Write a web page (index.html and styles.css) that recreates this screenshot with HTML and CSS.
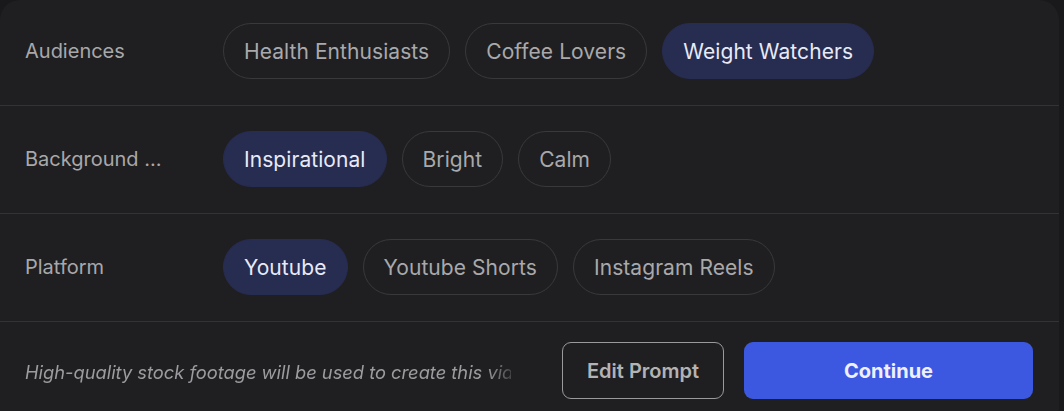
FILE: index.html
```html
<!DOCTYPE html>
<html lang="en">
<head>
<meta charset="utf-8">
<title>Video options</title>
<link rel="stylesheet" href="styles.css">
</head>
<body>
<div class="card">
  <div class="row first">
    <div class="label">Audiences</div>
    <div class="chips">
      <span class="chip">Health Enthusiasts</span>
      <span class="chip">Coffee Lovers</span>
      <span class="chip active">Weight Watchers</span>
    </div>
  </div>
  <div class="row">
    <div class="label">Background Music</div>
    <div class="chips">
      <span class="chip active">Inspirational</span>
      <span class="chip">Bright</span>
      <span class="chip">Calm</span>
    </div>
  </div>
  <div class="row">
    <div class="label">Platform</div>
    <div class="chips">
      <span class="chip active">Youtube</span>
      <span class="chip">Youtube Shorts</span>
      <span class="chip">Instagram Reels</span>
    </div>
  </div>
  <div class="footer">
    <div class="note">High-quality stock footage will be used to create this video</div>
    <div class="actions">
      <button class="btn btn-outline">Edit Prompt</button>
      <button class="btn btn-primary">Continue</button>
    </div>
  </div>
</div>
</body>
</html>
```
FILE: styles.css
```css
html, body {
  margin: 0;
  padding: 0;
  background: #19191b;
}
body {
  font-family: Inter, "Noto Sans", sans-serif;
  height: 411px;
  overflow: hidden;
}
.card {
  width: 1059px;
  background: #1f1f21;
  border-radius: 20px;
  overflow: hidden;
  height: 430px;
}
.row {
  display: flex;
  align-items: center;
  padding: 25px 25px 26px;
  border-bottom: 1px solid #333336;
}
.row.first {
  padding-top: 23px;
}
.label {
  flex: none;
  width: 140px;
  margin-right: 58px;
  font-size: 20px;
  color: #a8a8ab;
  white-space: nowrap;
  overflow: hidden;
  text-overflow: ellipsis;
}
.chips {
  display: flex;
  gap: 15px;
}
.chip {
  box-sizing: border-box;
  height: 56px;
  display: flex;
  align-items: center;
  padding: 0 20px;
  border: 1px solid #39393c;
  border-radius: 28px;
  font-size: 21px;
  letter-spacing: 0.07px;
  color: #a9a9ac;
  white-space: nowrap;
}
.chip.active {
  background: #272c51;
  border-color: #272c51;
  color: #e8eaf6;
}
.footer {
  display: flex;
  align-items: center;
  justify-content: space-between;
  padding: 20px 26px 20px 25px;
}
.note {
  width: 486px;
  padding-top: 2px;
  font-size: 18.3px;
  font-style: italic;
  color: #9c9ca0;
  white-space: nowrap;
  overflow: hidden;
  -webkit-mask-image: linear-gradient(to right, #000 95%, rgba(0,0,0,0.3) 100%);
  mask-image: linear-gradient(to right, #000 95%, rgba(0,0,0,0.3) 100%);
}
.actions {
  display: flex;
  gap: 20px;
}
.btn {
  box-sizing: border-box;
  height: 57px;
  border-radius: 9px;
  font-family: Inter, "Noto Sans", sans-serif;
  font-size: 20px;
  cursor: pointer;
}
.btn-outline {
  width: 162px;
  background: transparent;
  border: 1px solid #9a9a9d;
  color: #b3b3b6;
  font-weight: 600;
}
.btn-primary {
  width: 289px;
  background: #3c58e0;
  border: none;
  color: #eef0ff;
  font-weight: 700;
}
```
